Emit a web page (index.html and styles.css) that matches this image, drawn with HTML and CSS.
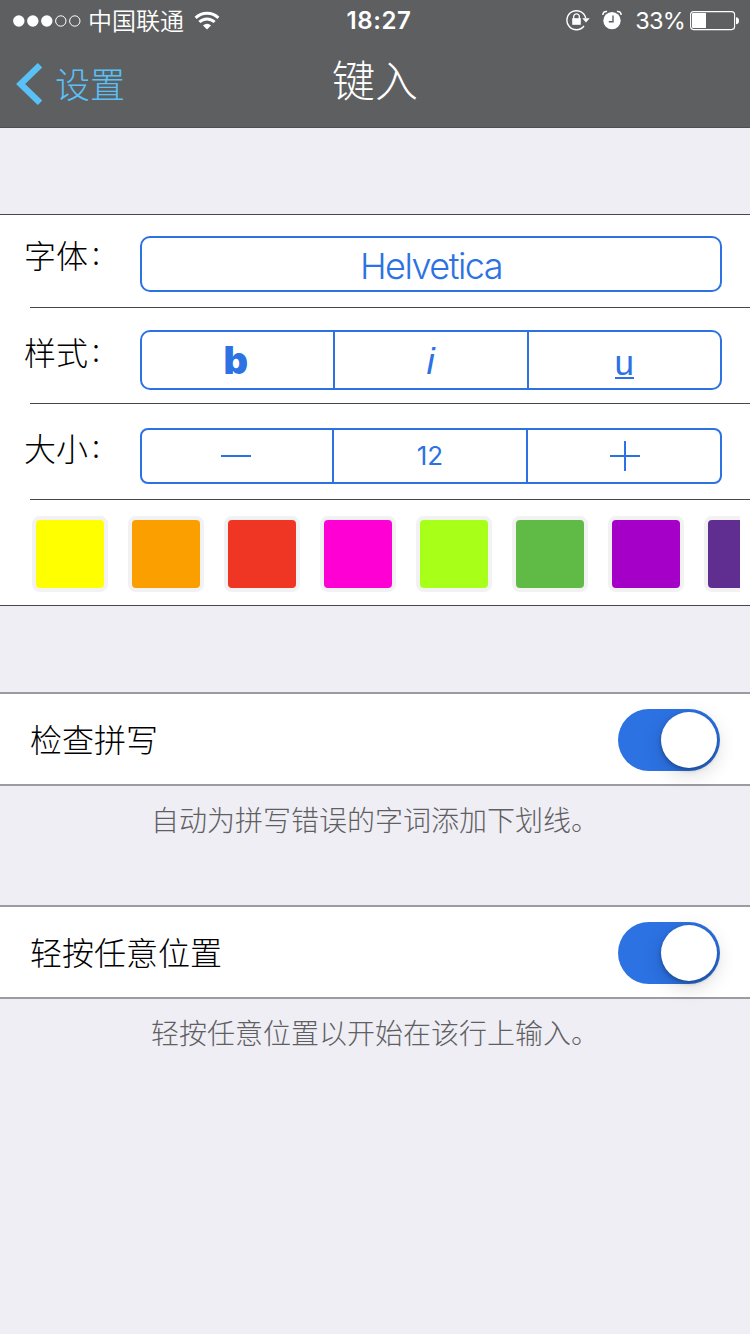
FILE: index.html
```html
<!DOCTYPE html>
<html lang="zh-CN">
<head>
<meta charset="utf-8">
<title>键入</title>
<link rel="stylesheet" href="styles.css">
</head>
<body>
<header class="header">
  <div class="status">
    <div class="status-left">
      <svg class="signal" width="68" height="12" viewBox="0 0 68 12"><g fill="#fff"><circle cx="5.8" cy="6" r="5.7"/><circle cx="19.8" cy="6" r="5.7"/><circle cx="33.8" cy="6" r="5.7"/></g><g fill="none" stroke="#fff"><circle cx="47.8" cy="6" r="5.2"/><circle cx="61.8" cy="6" r="5.2"/></g></svg>
      <span class="carrier">中国联通</span>
      <svg class="wifi" width="26" height="19" viewBox="0 0 26 19"><g fill="none" stroke="#fff" stroke-width="2.9"><path d="M1.6 6.9A16.2 16.2 0 0 1 24.4 6.9"/><path d="M5.4 11.1A10.7 10.7 0 0 1 20.6 11.1"/></g><path d="M9 14.4a5.7 5.7 0 0 1 8 0l-4 4.1z" fill="#fff"/></svg>
    </div>
    <time class="clock">18:27</time>
    <div class="status-right">
      <svg class="lock" width="24" height="22" viewBox="0 0 24 22"><path d="M18 17A9.500 9.500 0 1 1 19.700 9.200" fill="none" stroke="#fff" stroke-width="1.400"/><path d="M16.300 9.200h7.400l-3.700 4.300z" fill="#fff"/><path d="M6.200 9.200h8.600v6.600H6.200z" fill="#fff"/><path d="M7.700 10V7.600a2.800 2.800 0 0 1 5.600 0V10" fill="none" stroke="#fff" stroke-width="1.300"/></svg>
      <svg class="alarm" width="20" height="20" viewBox="0 0 20 20"><circle cx="10" cy="10.600" r="8.700" fill="#fff"/><path d="M11 5.500v6.200H6.800" fill="none" stroke="#5e5f61" stroke-width="1.400"/><path d="M.9 5C.8 2.600 2.700 1 5.100 1.500M19.100 5C19.200 2.600 17.300 1 14.900 1.500" fill="none" stroke="#fff" stroke-width="1.500"/></svg>
      <span class="percent">33%</span>
      <svg class="battery" width="50" height="20" viewBox="0 0 50 20"><rect x=".6" y=".6" width="44" height="18" rx="3" fill="none" stroke="#fff" stroke-width="1.100"/><path d="M2 3.100q0-1.100 1.100-1.100H16v15H3.100Q2 17 2 15.900z" fill="#fff"/><path d="M46 6.200q3 .3 3 3.500t-3 3.500z" fill="#fff"/></svg>
    </div>
  </div>
  <nav class="nav">
    <a class="back"><svg width="26" height="42" viewBox="0 0 26 42"><path d="M24 2.200 4.600 21 24 39.800" fill="none" stroke="#5ac1f7" stroke-width="6.300"/></svg><span>设置</span></a>
    <h1 class="title">键入</h1>
  </nav>
</header>
<main>
  <section class="format">
    <div class="row row-font">
      <span class="label">字体<i class="colon">:</i></span>
      <div class="control font-name"><span>Helvetica</span></div>
    </div>
    <div class="row row-style">
      <span class="label">样式<i class="colon">:</i></span>
      <div class="control segments">
        <span class="segment"><b class="bold">b</b></span><span class="segment"><em class="italic">i</em></span><span class="segment"><span class="underline">u</span></span>
      </div>
    </div>
    <div class="row row-size">
      <span class="label">大小<i class="colon">:</i></span>
      <div class="control stepper">
        <span class="segment"><svg width="30" height="30"><path d="M0 15h30" stroke="#2c72e3" stroke-width="2"/></svg></span><span class="segment size">12</span><span class="segment"><svg width="30" height="30"><path d="M0 15h30M15 0v30" stroke="#2c72e3" stroke-width="2"/></svg></span>
      </div>
    </div>
    <div class="swatches">
      <i class="swatch yellow"></i><i class="swatch orange"></i><i class="swatch red"></i><i class="swatch magenta"></i><i class="swatch lime"></i><i class="swatch green"></i><i class="swatch purple"></i><i class="swatch violet"></i>
    </div>
  </section>
  <section class="option">
    <div class="option-row"><span class="option-name">检查拼写</span><div class="switch"><i class="knob"></i></div></div>
    <p class="hint">自动为拼写错误的字词添加下划线。</p>
  </section>
  <section class="option">
    <div class="option-row"><span class="option-name">轻按任意位置</span><div class="switch"><i class="knob"></i></div></div>
    <p class="hint">轻按任意位置以开始在该行上输入。</p>
  </section>
</main>
</body>
</html>
```
FILE: styles.css
```css
* { box-sizing: border-box; }
body {
  margin: 0;
  width: 750px;
  min-height: 1334px;
  background: #efeef4;
  color: #000;
  font-family: "Noto Sans CJK SC", sans-serif;
  font-weight: 300;
  overflow: hidden;
}
svg { display: block; flex: none; }
i { font-style: normal; }

.header {
  height: 128px;
  background: #5e5f61;
  border-bottom: 1px solid #4e4e50;
  color: #fff;
}
.status {
  display: grid;
  grid-template-columns: 1fr auto 1fr;
  align-items: center;
  height: 40px;
  padding: 0 10px 0 13px;
}
.status-left, .status-right { display: flex; align-items: center; }
.status-right { justify-content: flex-end; }
.carrier { margin-left: 7px; padding-bottom: 2px; font-size: 24px; line-height: 38px; font-weight: 350; }
.wifi { margin-left: 10px; margin-top: -1px; }
.clock { font: 600 24px/40px Inter, sans-serif; letter-spacing: 0.6px; padding-left: 5px; }
.lock { margin-right: 12px; margin-top: -1px; }
.alarm { margin-right: 13px; margin-top: -1px; }
.percent { font: 400 23.5px/40px Inter, sans-serif; letter-spacing: -0.8px; margin-right: 5px; padding-top: 1px; }

.nav {
  display: grid;
  grid-template-columns: 1fr auto 1fr;
  align-items: center;
  height: 87px;
}
.back { display: flex; align-items: center; gap: 13px; padding-left: 16px; color: #5ac1f7; font-size: 35px; line-height: 52px; }
.back span { margin-top: -2px; }
.title { margin: 0; font-size: 43px; line-height: 64px; font-weight: 300; margin-top: -12px; }

.format {
  margin-top: 86px;
  height: 392px;
  background: #fff;
  border: solid #48484a;
  border-width: 1px 0;
}
.row {
  display: flex;
  align-items: flex-start;
  height: 96px;
  margin-left: 30px;
  padding-right: 28px;
  border-bottom: 1px solid #48484a;
}
.row-font { height: 93px; padding-top: 21px; }
.row-style { padding-top: 22px; }
.row-size { padding-top: 24px; }
.label {
  display: flex;
  flex: none;
  width: 116px;
  margin-left: -6px;
  font-size: 32px;
  line-height: 40px;
}
.row-font .label { margin-top: -2px; }
.row-style .label { margin-top: 1px; }
.row-size .label { margin-top: -1px; }
.colon { margin-left: 4px; margin-top: -3px; }
.control {
  flex: 1;
  display: flex;
  height: 56px;
  border: 2px solid #2c72e3;
  border-radius: 10px;
  color: #2c72e3;
}
.row-style .control { height: 60px; }
.row-size .control { border-radius: 8px; }
.font-name { justify-content: center; padding-top: 2px; font: 300 36px/52px Inter, sans-serif; letter-spacing: -1.5px; }
.segment { flex: 1; display: flex; align-items: center; justify-content: center; }
.segment + .segment { border-left: 2px solid #2c72e3; }
.stepper { display: grid; grid-template-columns: 190px 194px 194px; }
.stepper .segment:first-child { padding-right: 2px; }
.stepper .segment:last-child { padding-left: 2px; }
.bold { font: 900 38px/48px Inter, sans-serif; margin-right: 4px; }
.italic { font: italic 400 37px/48px "Liberation Sans", sans-serif; padding-top: 3px; margin-right: 1px; }
.underline { font: 400 35px/35px "Liberation Sans", sans-serif; height: 34px; margin-top: 3px; border-bottom: 2px solid #2c72e3; }
.size { font: 400 26px/52px Inter, sans-serif; }

.swatches {
  display: flex;
  gap: 20px;
  height: 105px;
  margin-right: 10px;
  padding: 16px 0 0 32px;
  overflow: hidden;
}
.swatch {
  flex: none;
  width: 76px;
  height: 76px;
  border: 4px solid #f2f2f3;
  border-radius: 8px;
}
.yellow { background: #ffff00; }
.orange { background: #fb9e00; }
.red { background: #ef3625; }
.magenta { background: #ff00d4; }
.lime { background: #a8ff18; }
.green { background: #60bb46; }
.purple { background: #a400c8; }
.violet { background: #602d91; }

.option { margin-top: 86px; }
.option + .option { margin-top: 65px; }
.option-row {
  display: flex;
  align-items: center;
  justify-content: space-between;
  height: 94px;
  padding: 0 30px;
  border: solid #9c9ca0;
  border-width: 2px 0;
  background: #fff;
  font-size: 32px;
  line-height: 48px;
}
.option-name { margin-top: -2px; }
.switch {
  display: flex;
  justify-content: flex-end;
  width: 102px;
  height: 62px;
  margin-top: 2px;
  padding: 3px;
  border-radius: 31px;
  background: #2c72e3;
}
.knob {
  width: 56px;
  height: 56px;
  border-radius: 50%;
  background: #fff;
  box-shadow: 0 2px 4px rgba(0, 0, 0, .3), 0 6px 20px rgba(0, 0, 0, .16);
}
.hint {
  margin: 12px 0 0;
  text-align: center;
  color: #5f5f63;
  font-size: 28px;
  line-height: 42px;
}
```
